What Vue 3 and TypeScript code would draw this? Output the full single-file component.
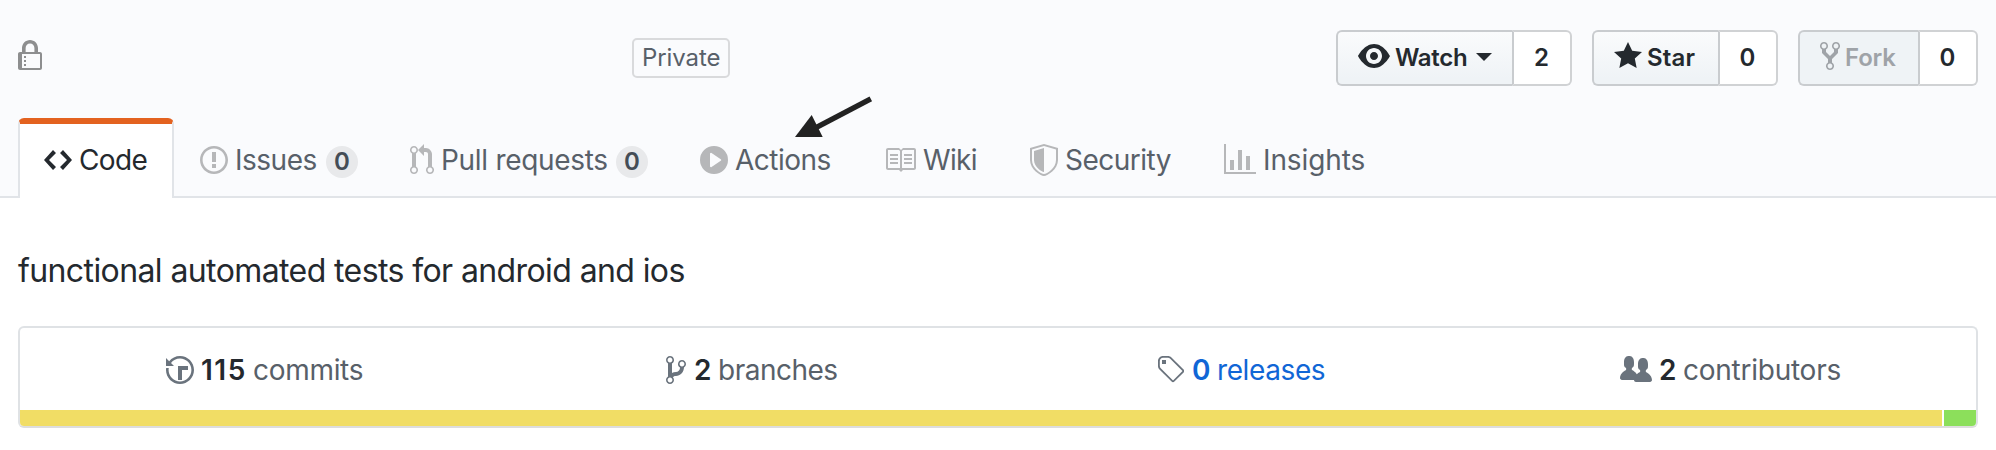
<script setup lang="ts">
interface Tab {
  key: string
  label: string
  width: number
  icon: string
  count?: number
}

interface SocialAction {
  key: string
  label: string
  width: number
  icon: string
  count: number
  caret?: boolean
}

interface Stat {
  key: string
  label: string
  width: number
  icon: string
  count: number
}

const lockIcon =
  'M4 13H3v-1h1v1zm8-6v7c0 .55-.45 1-1 1H1c-.55 0-1-.45-1-1V7c0-.55.45-1 1-1h1V4c0-2.2 1.8-4 4-4s4 1.8 4 4v2h1c.55 0 1 .45 1 1zM3.8 6h4.41V4c0-1.22-.98-2.2-2.2-2.2-1.22 0-2.2.98-2.2 2.2v2H3.8zM11 7H2v7h9V7zM4 8H3v1h1V8zm0 2H3v1h1v-1z'

const actions: SocialAction[] = [
  {
    key: 'watch',
    label: 'Watch',
    width: 16,
    count: 2,
    caret: true,
    icon: 'M8.06 2C3 2 0 8 0 8s3 6 8.06 6C13 14 16 8 16 8s-3-6-7.94-6zM8 12c-2.2 0-4-1.78-4-4 0-2.2 1.8-4 4-4 2.22 0 4 1.8 4 4 0 2.22-1.78 4-4 4zm2-4c0 1.11-.89 2-2 2-1.11 0-2-.89-2-2 0-1.11.89-2 2-2 1.11 0 2 .89 2 2z',
  },
  {
    key: 'star',
    label: 'Star',
    width: 14,
    count: 0,
    icon: 'M14 6l-4.9-.64L7 1 4.9 5.36 0 6l3.6 3.26L2.67 14 7 11.67 11.33 14l-.93-4.74L14 6z',
  },
  {
    key: 'fork',
    label: 'Fork',
    width: 10,
    count: 0,
    icon: 'M8 1a1.993 1.993 0 0 0-1 3.72V6L5 8 3 6V4.72A1.993 1.993 0 0 0 2 1a1.993 1.993 0 0 0-1 3.72V6.5l3 3v1.78A1.993 1.993 0 0 0 5 15a1.993 1.993 0 0 0 1-3.72V9.5l3-3V4.72A1.993 1.993 0 0 0 8 1zM2 4.2C1.34 4.2.8 3.65.8 3c0-.65.55-1.2 1.2-1.2.65 0 1.2.55 1.2 1.2 0 .65-.55 1.2-1.2 1.2zm3 10c-.66 0-1.2-.55-1.2-1.2 0-.65.55-1.2 1.2-1.2.65 0 1.2.55 1.2 1.2 0 .65-.55 1.2-1.2 1.2zm3-10c-.66 0-1.2-.55-1.2-1.2 0-.65.55-1.2 1.2-1.2.65 0 1.2.55 1.2 1.2 0 .65-.55 1.2-1.2 1.2z',
  },
]

const tabs: Tab[] = [
  {
    key: 'code',
    label: 'Code',
    width: 14,
    icon: 'M9.5 3L8 4.5 11.5 8 8 11.5 9.5 13 14 8 9.5 3zm-5 0L0 8l4.5 5L6 11.5 2.5 8 6 4.5 4.5 3z',
  },
  {
    key: 'issues',
    label: 'Issues',
    width: 14,
    count: 0,
    icon: 'M7 2.3c3.14 0 5.7 2.56 5.7 5.7s-2.56 5.7-5.7 5.7A5.71 5.71 0 0 1 1.3 8c0-3.14 2.56-5.7 5.7-5.7zM7 1C3.14 1 0 4.14 0 8s3.14 7 7 7 7-3.14 7-7-3.14-7-7-7zm1 3H6v5h2V4zm0 6H6v2h2v-2z',
  },
  {
    key: 'pulls',
    label: 'Pull requests',
    width: 12,
    count: 0,
    icon: 'M11 11.28V5c-.03-.78-.34-1.47-.94-2.06C9.46 2.35 8.78 2.03 8 2H7V0L4 3l3 3V4h1c.27.02.48.11.69.31.21.2.3.42.31.69v6.28A1.993 1.993 0 0 0 10 15a1.993 1.993 0 0 0 1-3.72zm-1 2.92c-.66 0-1.2-.55-1.2-1.2 0-.65.55-1.2 1.2-1.2.65 0 1.2.55 1.2 1.2 0 .65-.55 1.2-1.2 1.2zM4 3c0-1.11-.89-2-2-2a1.993 1.993 0 0 0-1 3.72v6.56A1.993 1.993 0 0 0 2 15a1.993 1.993 0 0 0 1-3.72V4.72c.59-.34 1-.98 1-1.72zm-.8 10c0 .66-.55 1.2-1.2 1.2-.65 0-1.2-.55-1.2-1.2 0-.65.55-1.2 1.2-1.2.65 0 1.2.55 1.2 1.2zM2 4.2C1.34 4.2.8 3.65.8 3c0-.65.55-1.2 1.2-1.2.65 0 1.2.55 1.2 1.2 0 .65-.55 1.2-1.2 1.2z',
  },
  {
    key: 'actions',
    label: 'Actions',
    width: 14,
    icon: 'M14 8A7 7 0 1 1 0 8a7 7 0 0 1 14 0zm-8.223 3.482l4.599-3.066a.5.5 0 0 0 0-.832L5.777 4.518A.5.5 0 0 0 5 4.934v6.132a.5.5 0 0 0 .777.416z',
  },
  {
    key: 'wiki',
    label: 'Wiki',
    width: 16,
    icon: 'M3 5h4v1H3V5zm0 3h4V7H3v1zm0 2h4V9H3v1zm11-5h-4v1h4V5zm0 2h-4v1h4V7zm0 2h-4v1h4V9zm2-6v9c0 .55-.45 1-1 1H9.5l-1 1-1-1H2c-.55 0-1-.45-1-1V3c0-.55.45-1 1-1h5.5l1 1 1-1H15c.55 0 1 .45 1 1zm-8 .5L7.5 3H2v9h6V3.5zm7-.5H9.5l-.5.5V12h6V3z',
  },
  {
    key: 'security',
    label: 'Security',
    width: 14,
    icon: 'M0 2l7-2 7 2v6.02C14 12.69 8.69 16 7 16c-1.69 0-7-3.31-7-7.98V2zm1 .75L7 1l6 1.75v5.268C13 12.104 8.449 15 7 15c-1.449 0-6-2.896-6-6.982V2.75zm1 .75L7 2v12c-1.207 0-5-2.482-5-5.985V3.5z',
  },
  {
    key: 'insights',
    label: 'Insights',
    width: 16,
    icon: 'M16 14v1H0V0h1v14h15zM5 13H3V8h2v5zm4 0H7V3h2v10zm4 0h-2V6h2v7z',
  },
]

const stats: Stat[] = [
  {
    key: 'commits',
    label: 'commits',
    width: 14,
    count: 115,
    icon: 'M8 13H6V6h5v2H8v5zM7 1C4.81 1 2.87 2.02 1.59 3.59L0 2v4h4L2.5 4.5C3.55 3.17 5.17 2.3 7 2.3c3.14 0 5.7 2.56 5.7 5.7s-2.56 5.7-5.7 5.7A5.71 5.71 0 0 1 1.3 8c0-.34.03-.67.09-1H.08C.03 7.33 0 7.66 0 8c0 3.86 3.14 7 7 7s7-3.14 7-7-3.14-7-7-7z',
  },
  {
    key: 'branches',
    label: 'branches',
    width: 10,
    count: 2,
    icon: 'M10 5c0-1.11-.89-2-2-2a1.993 1.993 0 0 0-1 3.72v.3c-.02.52-.23.98-.63 1.38-.4.4-.86.61-1.38.63-.83.02-1.48.16-2 .45V4.72a1.993 1.993 0 0 0-1-3.72C.88 1 0 1.89 0 3a2 2 0 0 0 1 1.72v6.56c-.59.35-1 .99-1 1.72 0 1.11.89 2 2 2 1.11 0 2-.89 2-2 0-.53-.2-1-.53-1.36.09-.06.48-.41.59-.47.25-.11.56-.17.94-.17 1.05-.05 1.95-.45 2.75-1.25S8.95 7.77 9 6.73h-.02C9.59 6.37 10 5.73 10 5zM2 1.8c.66 0 1.2.55 1.2 1.2 0 .65-.55 1.2-1.2 1.2C1.35 4.2.8 3.65.8 3c0-.65.55-1.2 1.2-1.2zm0 12.41c-.66 0-1.2-.55-1.2-1.2 0-.65.55-1.2 1.2-1.2.65 0 1.2.55 1.2 1.2 0 .65-.55 1.2-1.2 1.2zm6-8c-.66 0-1.2-.55-1.2-1.2 0-.65.55-1.2 1.2-1.2.65 0 1.2.55 1.2 1.2 0 .65-.55 1.2-1.2 1.2z',
  },
  {
    key: 'releases',
    label: 'releases',
    width: 14,
    count: 0,
    icon: 'M7.73 1.73C7.26 1.26 6.62 1 5.96 1H3.5C2.13 1 1 2.13 1 3.5v2.47c0 .66.27 1.3.73 1.77l6.06 6.06c.39.39 1.02.39 1.41 0l4.59-4.59a.996.996 0 0 0 0-1.41L7.73 1.73zM2.38 7.09c-.31-.3-.47-.7-.47-1.13V3.5c0-.88.72-1.59 1.59-1.59h2.47c.42 0 .83.16 1.13.47l6.14 6.13-4.73 4.73-6.13-6.15zM3.01 3h2v2H3V3h.01z',
  },
  {
    key: 'contributors',
    label: 'contributors',
    width: 16,
    count: 2,
    icon: 'M16 12.999c0 .439-.45 1-1 1H7.995c-.539 0-.994-.447-.995-.999H1c-.54 0-1-.561-1-1 0-2.634 3-4 3-4s.229-.409 0-1c-.841-.621-1.058-.59-1-3 .058-2.419 1.367-3 2.5-3s2.442.58 2.5 3c.058 2.41-.159 2.379-1 3-.229.59 0 1 0 1s1.549.711 2.42 2.088C9.196 9.369 10 8.999 10 8.999s.229-.409 0-1c-.841-.62-1.058-.59-1-3 .058-2.419 1.367-3 2.5-3s2.437.581 2.495 3c.059 2.41-.158 2.38-1 3-.229.59 0 1 0 1s3.005 1.366 3.005 4',
  },
]
</script>

<template>
  <div class="page">
    <header class="head">
      <div class="title-row">
        <svg class="icon lock" width="24" height="32" viewBox="0 0 12 16"><path fill-rule="evenodd" :d="lockIcon" /></svg>
        <span class="private">Private</span>
        <div class="social">
          <div v-for="a in actions" :key="a.key" class="group" :class="a.key">
            <button class="btn" type="button" :disabled="a.key === 'fork'">
              <svg class="icon" :width="a.width * 2" height="32" :viewBox="`0 0 ${a.width} 16`"><path fill-rule="evenodd" :d="a.icon" /></svg>
              <span class="btn-label">{{ a.label }}</span>
              <span v-if="a.caret" class="caret"></span>
            </button>
            <a class="social-count">{{ a.count }}</a>
          </div>
        </div>
      </div>
      <nav class="tabs">
        <a v-for="t in tabs" :key="t.key" class="tab" :class="[t.key, { selected: t.key === 'code' }]">
          <svg class="icon" :width="t.width * 2" height="32" :viewBox="`0 0 ${t.width} 16`"><path fill-rule="evenodd" :d="t.icon" /></svg>
          <span class="tab-label">{{ t.label }}</span>
          <span v-if="t.count !== undefined" class="counter">{{ t.count }}</span>
        </a>
      </nav>
      <svg class="arrow" width="84" height="48" viewBox="0 0 84 48">
        <path d="M24 33.600L78.800 4.900" stroke="#222" stroke-width="5.400" />
        <path d="M3 42.900L19.700 21L30.700 42.900z" fill="#222" />
      </svg>
    </header>

    <main class="content">
      <p class="description">functional automated tests for android and ios</p>
      <section class="summary">
        <ul class="stats">
          <li v-for="s in stats" :key="s.key" class="stat" :class="s.key">
            <svg class="icon" :width="s.width * 2" height="32" :viewBox="`0 0 ${s.width} 16`"><path fill-rule="evenodd" :d="s.icon" /></svg>
            <span class="num">{{ s.count }}</span>
            <span class="stat-label">{{ s.label }}</span>
          </li>
        </ul>
        <div class="languages">
          <span class="lang yellow"></span>
          <span class="lang green"></span>
        </div>
      </section>
    </main>
  </div>
</template>

<style>
body {
  margin: 0;
  background: #fff;
}
</style>

<style scoped>
.page {
  width: 1996px;
  height: 450px;
  overflow: hidden;
  background: #fff;
  color: #24292e;
  font-family: Inter, 'Liberation Sans', sans-serif;
  font-size: 28px;
}

.icon {
  display: block;
  flex: none;
  fill: currentColor;
}

.head {
  position: relative;
  box-sizing: border-box;
  height: 198px;
  padding: 30px 18px 0;
  background: #fafbfd;
  border-bottom: 2px solid #e1e4e8;
}

.title-row {
  display: flex;
  align-items: center;
  height: 56px;
}

.lock {
  margin-bottom: 4px;
  color: #8d8e8f;
}

.private {
  box-sizing: border-box;
  width: 98px;
  height: 40px;
  margin-left: 590px;
  padding-left: 8px;
  border: 2px solid #d9dadc;
  border-radius: 5px;
  color: #586069;
  font-size: 24px;
  line-height: 35px;
  letter-spacing: -0.1px;
  white-space: nowrap;
}

.social {
  display: flex;
  gap: 20px;
  margin-left: auto;
}

.group {
  display: flex;
  height: 56px;
  font-size: 24px;
  font-weight: 600;
}

.btn {
  display: flex;
  align-items: center;
  box-sizing: border-box;
  gap: 6px;
  height: 56px;
  margin: 0;
  padding: 0 20px 2px;
  border: 2px solid #c9cccf;
  border-right: 0;
  border-radius: 6px 0 0 6px;
  background: linear-gradient(-180deg, #fafbfc 0%, #eff3f6 90%);
  color: #24292e;
  font: inherit;
}

.btn:disabled {
  background: #eff3f6;
  color: #9fa3a8;
}

.btn .icon {
  margin-bottom: 2px;
}

.btn-label {
  margin-left: -1px;
  padding-right: 1px;
  text-align: left;
  white-space: nowrap;
}

.watch .btn-label {
  width: 74px;
  letter-spacing: -0.3px;
}

.star .btn-label {
  width: 50px;
  letter-spacing: 0.2px;
}

.fork .btn-label {
  width: 52px;
  letter-spacing: -0.2px;
}

.caret {
  border: 8px solid transparent;
  border-top-color: currentColor;
  border-bottom: 0;
}

.social-count {
  box-sizing: border-box;
  width: 60px;
  padding-right: 1px;
  border: 2px solid #d0d2d4;
  border-left-color: #c9cccf;
  border-radius: 0 6px 6px 0;
  background: #fff;
  line-height: 51px;
  text-align: center;
}

.tabs {
  display: flex;
  height: 80px;
  margin-top: 32px;
}

.tab {
  display: flex;
  align-items: center;
  box-sizing: border-box;
  height: 80px;
  padding: 0 24px 2px;
  border: 2px solid transparent;
  border-top-width: 6px;
  border-bottom: 0;
  color: #586069;
  white-space: nowrap;
}

.tab .icon {
  margin-right: 8px;
  color: #b6b7b9;
}

.tab-label {
  margin-left: -1px;
  padding-right: 1px;
}

.selected {
  border-color: #e36220 #e1e4e8 transparent;
  border-radius: 6px 6px 0 0;
  background: #fff;
  color: #24292e;
}

.selected .icon {
  color: #24292e;
}

.code .tab-label {
  width: 68px;
  letter-spacing: -0.6px;
}

.issues .tab-label {
  width: 82px;
  letter-spacing: -0.5px;
}

.pulls .tab-label {
  width: 166px;
  letter-spacing: -0.3px;
}

.actions .tab-label {
  width: 96px;
  letter-spacing: -0.5px;
}

.wiki .tab-label {
  width: 54px;
  letter-spacing: -0.7px;
}

.security .tab-label {
  width: 106px;
  letter-spacing: -0.5px;
}

.insights .tab-label {
  letter-spacing: -0.1px;
}

.counter {
  width: 32px;
  height: 32px;
  margin: 4px 0 0 8px;
  border-radius: 16px;
  background: #e8e9eb;
  color: #444d56;
  font-size: 24px;
  font-weight: 600;
  line-height: 32px;
  text-align: center;
}

.arrow {
  position: absolute;
  top: 94px;
  left: 792px;
}

.content {
  padding: 0 18px;
}

.description {
  margin: 0;
  padding-top: 53px;
  font-size: 32px;
  line-height: 40px;
  letter-spacing: -0.6px;
}

.summary {
  box-sizing: border-box;
  height: 102px;
  margin-top: 35px;
  overflow: hidden;
  border: 2px solid #dfe2e5;
  border-bottom-color: #ddd;
  border-radius: 6px;
}

.stats {
  display: grid;
  grid-template-columns: repeat(4, 1fr);
  height: 82px;
  margin: 0;
  padding: 0;
  list-style: none;
}

.stat {
  display: flex;
  align-items: center;
  justify-content: center;
  padding-top: 2px;
  color: #586069;
  white-space: nowrap;
}

.stat .icon {
  margin-right: 8px;
  color: #6a737d;
}

.num {
  width: 24px;
  color: #24292e;
  font-weight: 600;
}

.commits .icon {
  margin-right: 7px;
}

.commits .num {
  width: 52px;
  letter-spacing: 1.5px;
}

.commits .stat-label {
  width: 110px;
  letter-spacing: -0.3px;
}

.branches .stat-label {
  width: 123px;
  letter-spacing: -0.5px;
}

.releases .num,
.releases .stat-label {
  color: #1066d6;
}

.releases .num {
  width: 25px;
}

.releases .stat-label {
  width: 112px;
  letter-spacing: -0.4px;
}

.contributors .icon {
  margin-right: 7px;
}

.contributors .stat-label {
  width: 160px;
  letter-spacing: -0.25px;
}

.languages {
  display: flex;
  gap: 2px;
  height: 16px;
}

.yellow {
  flex: 1;
  background: #f1dd65;
}

.green {
  width: 32px;
  background: #8cdf5b;
}
</style>
